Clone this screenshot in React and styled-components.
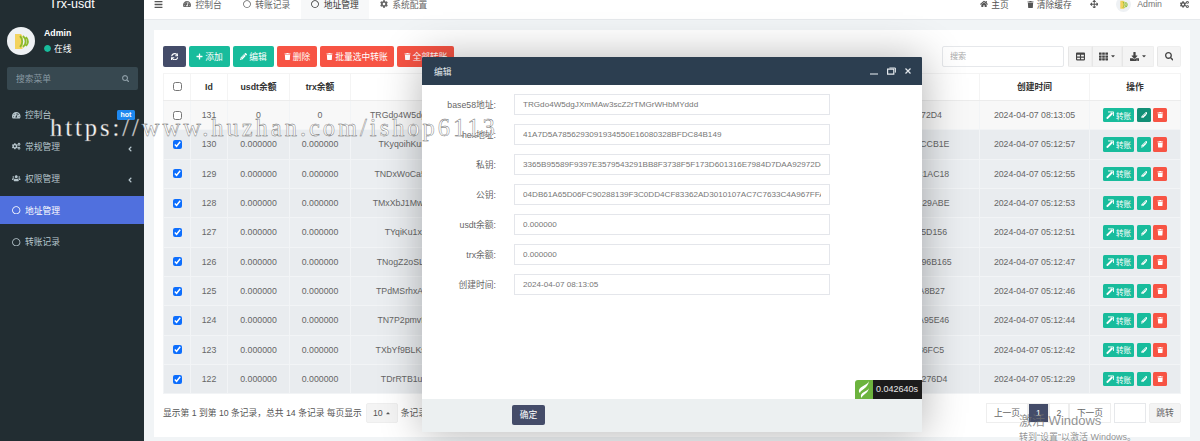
import React from 'react';
import styled, { createGlobalStyle } from 'styled-components';
import {
    FaAngleLeft,
    FaArrowsAlt,
    FaCaretDown,
    FaCaretUp,
    FaCircle,
    FaCog,
    FaCogs,
    FaDownload,
    FaHome,
    FaPencilAlt,
    FaPlus,
    FaRegCircle,
    FaSearch,
    FaSync,
    FaTable,
    FaTachometerAlt,
    FaTh,
    FaTrash,
    FaUsers,
    FaBars,
} from 'react-icons/fa';

const FONT = `"Liberation Sans", "Noto Sans CJK SC", sans-serif`;

const rows = [
    { id: 131, usdt: '0', trx: '0', checked: false, addr: 'TRGdo4W5dgJXmMAw3scZ2rTMGrWHbMYddd', key: '3365B95589F9397E3579543291BB8F3738F5F173D601316E7984D7DAA92972D4', time: '2024-04-07 08:13:05' },
    { id: 130, addr: 'TKyqoihKurd8sjwPqe2nfUa7toyhxkzgbnRea', key: 'DE1FB94DEAC07BFDE53ACFD82EBCA41FDEAB7CD19FEBA62DCEF08AD7CCB1E', time: '2024-04-07 05:12:57' },
    { id: 129, addr: 'TNDxWoCa5tG8pVrs2nYeKqfi3hdLuzmwKcbe', key: '1EFAD92CDE7FA06DBCE31FAD84BEC27DFAE95CB1ADF60ECB7D3FEA21C1AC18', time: '2024-04-07 05:12:55' },
    { id: 128, addr: 'TMxXbJ1Mwq7ERkzs3pAfYo9gNtHdLuVcRans', key: '8FACB73DEC1FA95BDCE46FAD12ECB08DFEA73CB9ADF41ECB6D2FEA05B29ABE', time: '2024-04-07 05:12:53' },
    { id: 127, addr: 'TYqiKu1xAe6vfnrt5hoLdSgzjpW2mcbsne', key: '1DCBE28FDAC74EBDF09CAE35DBF17ACED82FB4DCA60EFB9C3DAE17FA5D156', time: '2024-04-07 05:12:51' },
    { id: 126, addr: 'TNogZ2oSLd4KvuYr8PfEaxTqw1NhjmcbRes', key: '94ADBF17ECDA62FBDE30ACF58DCB29EADF74BC1FDE06ACB8F2DEC47AF96B165', time: '2024-04-07 05:12:47' },
    { id: 125, addr: 'TPdMSrhxAk3JytUo9eWbFcq5nGvLizBmeHs', key: 'CEFB60DABE18FCDA93EBF46CDA05BEFD71CA8EDB42FCE7A1DBF36CEA8B27', time: '2024-04-07 05:12:46' },
    { id: 124, addr: 'TN7P2pmvNf6HsuQr1XgYcEaKt8jLozdbnRe', key: '50DFCA34EDBC86AFDE12CBF79ADE43CBFA08DE6FCB15EAD9C2FBE70DA95E46', time: '2024-04-07 05:12:44' },
    { id: 123, addr: 'TXbYf9BLKs4GmwZu7aDtRpEqh2nVicoeHsn', key: 'A7D093E4C1D6F2385A0E17C4B96D2038C1F5E7A9240C6138E5D7B0291F36FC5', time: '2024-04-07 05:12:42' },
    { id: 122, addr: 'TDrRTB1uiq3nVmKp8hYoSzfga5jxeLcnWb', key: '5C0E2A9D7F13B6480D2C1E76AF395B08D4172E6CA9F0583B1D7E40A26C2276D4', time: '2024-04-07 05:12:29' },
];

const fields = [
    { label: 'base58地址:', value: 'TRGdo4W5dgJXmMAw3scZ2rTMGrWHbMYddd' },
    { label: 'hex地址:', value: '41A7D5A7856293091934550E16080328BFDC84B149' },
    { label: '私钥:', value: '3365B95589F9397E3579543291BB8F3738F5F173D601316E7984D7DAA92972D4' },
    { label: '公钥:', value: '04DB61A65D06FC90288139F3C0DD4CF83362AD3010107AC7C7633C4A967FFA21B0' },
    { label: 'usdt余额:', value: '0.000000' },
    { label: 'trx余额:', value: '0.000000' },
    { label: '创建时间:', value: '2024-04-07 08:13:05' },
];

const menu = [
    { name: '控制台', icon: FaTachometerAlt, hot: true },
    { name: '常规管理', icon: FaCogs, arrow: true },
    { name: '权限管理', icon: FaUsers, arrow: true },
    { name: '地址管理', icon: FaRegCircle, active: true },
    { name: '转账记录', icon: FaRegCircle },
];

const tabs = [
    { name: '控制台', icon: FaTachometerAlt },
    { name: '转账记录', icon: FaRegCircle },
    { name: '地址管理', icon: FaRegCircle, active: true },
    { name: '系统配置', icon: FaCog },
];

const SendIcon = () => (
    <svg width="8" height="8" viewBox="0 0 10 10" fill="none" stroke="currentColor">
        <path d="M1 9.5 8 2.5" strokeWidth="2.4" />
        <path d="M2.5 1.2h7v5" strokeWidth="1.2" />
    </svg>
);

const Avatar = ({ size }) => (
    <svg width={size} height={size} viewBox="0 0 28 28">
        <circle cx="14" cy="14" r="14" fill="#eef1f4" />
        <path d="M8 7h6l1.5 2v13H8z" fill="#f3d35f" />
        <path d="M13 9c3 3 3 8 0 11M16 9c3.5 3 3.5 8 0 11M19 10c2.5 3 2.5 6 0 9" fill="none" stroke="#8dbb2b" strokeWidth="1.8" />
    </svg>
);

const App = () => {
    return (
        <>
            <GlobalStyle />
            <Layout>
                <Sidebar>
                    <Logo>Trx-usdt</Logo>
                    <UserPanel>
                        <Avatar size={28} />
                        <UserInfo>
                            <UserName>Admin</UserName>
                            <UserStatus>
                                <FaCircle size={7} color="#18bc9c" />
                                在线
                            </UserStatus>
                        </UserInfo>
                    </UserPanel>
                    <MenuSearch>
                        搜索菜单
                        <FaSearch size={7.5} />
                    </MenuSearch>
                    <Menu>
                        {menu.map((m) => (
                            <MenuItem key={m.name} $active={m.active}>
                                <MenuIcon>{React.createElement(m.icon, { size: 8.5 })}</MenuIcon>
                                {m.name}
                                {m.hot && <HotBadge>hot</HotBadge>}
                                {m.arrow && (
                                    <MenuArrow>
                                        <FaAngleLeft size={8} />
                                    </MenuArrow>
                                )}
                            </MenuItem>
                        ))}
                    </Menu>
                </Sidebar>

                <Main>
                    <TopNav>
                        <NavToggle>
                            <FaBars size={9} />
                        </NavToggle>
                        {tabs.map((t) => (
                            <NavTab key={t.name} $active={t.active}>
                                {React.createElement(t.icon, { size: 8 })}
                                {t.name}
                            </NavTab>
                        ))}
                        <NavRight>
                            <NavLink>
                                <FaHome size={8} />
                                主页
                            </NavLink>
                            <NavLink>
                                <FaTrash size={7} />
                                清除缓存
                            </NavLink>
                            <NavLink>
                                <FaArrowsAlt size={8.5} />
                            </NavLink>
                            <NavUser>
                                <Avatar size={15} />
                                Admin
                            </NavUser>
                            <NavLink>
                                <FaCogs size={9} />
                            </NavLink>
                        </NavRight>
                    </TopNav>

                    <Content>
                        <Card>
                            <Toolbar>
                                <Btn $kind="dark" $w={23}>
                                    <FaSync size={7.5} />
                                </Btn>
                                <Btn $kind="green" $w={41}>
                                    <FaPlus size={7} />
                                    添加
                                </Btn>
                                <Btn $kind="green" $w={41}>
                                    <FaPencilAlt size={7} />
                                    编辑
                                </Btn>
                                <Btn $kind="red" $w={40}>
                                    <FaTrash size={7} />
                                    删除
                                </Btn>
                                <Btn $kind="red" $w={74}>
                                    <FaTrash size={7} />
                                    批量选中转账
                                </Btn>
                                <Btn $kind="red" $w={57}>
                                    <FaTrash size={7} />
                                    全部转账
                                </Btn>
                                <ToolRight>
                                    <SearchInput placeholder="搜索" readOnly />
                                    <ToolGroup>
                                        <ToolBtn $w={24}>
                                            <FaTable size={9} />
                                        </ToolBtn>
                                        <ToolBtn $w={30}>
                                            <FaTh size={9} />
                                            <FaCaretDown size={6} />
                                        </ToolBtn>
                                        <ToolBtn $w={32}>
                                            <FaDownload size={9} />
                                            <FaCaretDown size={6} />
                                        </ToolBtn>
                                    </ToolGroup>
                                    <SearchBtn>
                                        <FaSearch size={8.5} />
                                    </SearchBtn>
                                </ToolRight>
                            </Toolbar>

                            <Table>
                                <colgroup>
                                    <col width="27" />
                                    <col width="37" />
                                    <col width="62" />
                                    <col width="61" />
                                    <col width="228" />
                                    <col width="401" />
                                    <col width="110" />
                                    <col width="91" />
                                </colgroup>
                                <thead>
                                    <tr>
                                        <Th>
                                            <Check readOnly type="checkbox" />
                                        </Th>
                                        <Th>Id</Th>
                                        <Th>usdt余额</Th>
                                        <Th>trx余额</Th>
                                        <Th>base58地址</Th>
                                        <Th>私钥</Th>
                                        <Th>创建时间</Th>
                                        <Th>操作</Th>
                                    </tr>
                                </thead>
                                <tbody>
                                    {rows.map((r, index) => (
                                        <Row key={r.id} $selected={r.checked !== false} $odd={index % 2 === 0}>
                                            <Td>
                                                <Check readOnly type="checkbox" checked={r.checked !== false} />
                                            </Td>
                                            <Td>{r.id}</Td>
                                            <Td>{r.usdt || '0.000000'}</Td>
                                            <Td>{r.trx || '0.000000'}</Td>
                                            <Td>{r.addr}</Td>
                                            <Td>{r.key}</Td>
                                            <Td>{r.time}</Td>
                                            <Td>
                                                <Actions>
                                                    <MiniBtn $kind="green" $w={31.5}>
                                                        <SendIcon />
                                                        转账
                                                    </MiniBtn>
                                                    <MiniBtn $kind={index === 0 ? 'hover' : 'green'} $w={14}>
                                                        <FaPencilAlt size={6.5} />
                                                    </MiniBtn>
                                                    <MiniBtn $kind="red" $w={14}>
                                                        <FaTrash size={6.5} />
                                                    </MiniBtn>
                                                </Actions>
                                            </Td>
                                        </Row>
                                    ))}
                                </tbody>
                            </Table>

                            <TableFooter>
                                <PageInfo>
                                    显示第 1 到第 10 条记录，总共 14 条记录 每页显示
                                    <PageSize>
                                        10 <FaCaretUp size={6} />
                                    </PageSize>
                                    条记录
                                </PageInfo>
                                <Pager>
                                    <PageBtn $w={42}>上一页</PageBtn>
                                    <PageBtn $w={21} $active>
                                        1
                                    </PageBtn>
                                    <PageBtn $w={20}>2</PageBtn>
                                    <PageBtn $w={42}>下一页</PageBtn>
                                    <JumpInput readOnly />
                                    <JumpBtn>跳转</JumpBtn>
                                </Pager>
                            </TableFooter>
                        </Card>
                    </Content>
                </Main>

                <Modal>
                    <ModalHead>
                        编辑
                        <ModalControls>
                            <svg width="8" height="8" viewBox="0 0 8 8" stroke="#cfd6dc" fill="none">
                                <path d="M0 7h8" strokeWidth="1.2" />
                            </svg>
                            <svg width="9" height="8" viewBox="0 0 9 8" stroke="#e3e8ec" fill="none">
                                <path d="M.6 2.2h6.2v5H.6z" strokeWidth="1.2" />
                                <path d="M2.4 1h6v4.6" strokeWidth="1" />
                            </svg>
                            <svg width="6" height="6" viewBox="0 0 6 6" stroke="#e3e8ec" fill="none">
                                <path d="M.5.5l5 5M5.5.5l-5 5" strokeWidth="1.2" />
                            </svg>
                        </ModalControls>
                    </ModalHead>
                    <ModalBody>
                        {fields.map((f) => (
                            <FormRow key={f.label}>
                                <FormLabel>{f.label}</FormLabel>
                                <FormInput readOnly value={f.value} />
                            </FormRow>
                        ))}
                        <Trace>
                            <TraceLogo>
                                <svg width="12" height="17" viewBox="0 0 12 17" fill="#fff">
                                    <path d="M11 0C10 4 2 5 1 9c-.4 1.6.2 2.6 1 3C2.6 8.5 10 7.5 11 0z" />
                                    <path d="M11 7C10 10 4 11 3 14c-.3 1 0 2 .6 3C4.5 13.5 10 12.5 11 7z" />
                                </svg>
                            </TraceLogo>
                            <TraceTime>0.042640s</TraceTime>
                        </Trace>
                    </ModalBody>
                    <ModalFoot>
                        <ConfirmBtn>确定</ConfirmBtn>
                    </ModalFoot>
                </Modal>

                <Watermark>https://www.huzhan.com/ishop6113</Watermark>
                <Activation>
                    <ActivationTitle>激活 Windows</ActivationTitle>
                    转到“设置”以激活 Windows。
                </Activation>
            </Layout>
        </>
    );
};

export default App;

const GlobalStyle = createGlobalStyle`
    html, body {
        margin: 0;
        height: 441px;
        overflow: hidden;
        background: #f1f4f6;
    }
    * {
        box-sizing: border-box;
    }
    #root {
        font-family: ${FONT};
        font-size: 8.75px;
        color: #666;
    }
`;

const Layout = styled.div`
    display: flex;
    margin-top: -11px;
    height: 452px;
    position: relative;
`;

const Sidebar = styled.aside`
    width: 144px;
    flex: none;
    background: #222d32;
    color: #b8c7ce;
`;

const Logo = styled.div`
    height: 31px;
    line-height: 31px;
    text-align: center;
    color: #fff;
    font-size: 12.5px;
`;

const UserPanel = styled.div`
    display: flex;
    align-items: center;
    gap: 9px;
    height: 35px;
    padding: 7px 7px 0;
`;

const UserInfo = styled.div`
    display: flex;
    flex-direction: column;
    gap: 4px;
    padding-top: 1px;
`;

const UserName = styled.div`
    color: #fff;
    font-weight: 600;
`;

const UserStatus = styled.div`
    display: flex;
    align-items: center;
    gap: 3px;
    color: #fff;
`;

const MenuSearch = styled.div`
    display: flex;
    align-items: center;
    justify-content: space-between;
    margin: 12px 6px 0 7px;
    padding: 0 9px;
    height: 23px;
    border-radius: 2px;
    background: #374850;
    color: #8a9aa3;
`;

const Menu = styled.ul`
    list-style: none;
    margin: 10.5px 0 0;
    padding: 0;
`;

const MenuItem = styled.li`
    display: flex;
    align-items: center;
    position: relative;
    height: 28.5px;
    margin-bottom: 3.3px;
    padding-left: 12px;
    background: ${(p) => (p.$active ? '#5070de' : 'transparent')};
    color: ${(p) => (p.$active ? '#fff' : '#b8c7ce')};
`;

const MenuIcon = styled.span`
    display: inline-flex;
    width: 13px;
`;

const HotBadge = styled.span`
    margin-left: auto;
    margin-right: 9px;
    width: 18px;
    height: 9.5px;
    line-height: 9px;
    border-radius: 1.5px;
    text-align: center;
    background: #1e88f0;
    color: #fff;
    font-size: 7px;
    font-weight: 600;
`;

const MenuArrow = styled.span`
    display: inline-flex;
    margin-left: auto;
    margin-right: 10px;
    padding-top: 4px;
`;

const Main = styled.div`
    flex: 1;
    min-width: 0;
    display: flex;
    flex-direction: column;
`;

const TopNav = styled.nav`
    display: flex;
    height: 31px;
    flex: none;
    background: #fff;
    border-bottom: 1.5px solid #e6e9ec;
    color: #555;
`;

const NavToggle = styled.div`
    display: flex;
    align-items: center;
    width: 28.5px;
    padding-left: 10px;
`;

const NavTab = styled.div`
    display: flex;
    align-items: center;
    gap: 4.5px;
    padding: 0 10.5px;
    background: ${(p) => (p.$active ? '#f7f8f9' : 'transparent')};
    color: ${(p) => (p.$active ? '#333' : '#666')};
`;

const NavRight = styled.div`
    display: flex;
    align-items: center;
    gap: 18px;
    margin-left: auto;
    padding-right: 11px;
`;

const NavLink = styled.div`
    display: flex;
    align-items: center;
    gap: 3px;
`;

const NavUser = styled(NavLink)`
    gap: 6px;
    color: #777;
`;

const Content = styled.main`
    padding: 10px 10px 0;
    flex: 1;
    min-height: 0;
`;

const Card = styled.section`
    height: 407px;
    padding: 16px 9px 0;
    background: #fff;
`;

const Toolbar = styled.div`
    display: flex;
    gap: 3px;
    height: 20.5px;
`;

const kindColors = {
    dark: '#444c69',
    green: '#18bc9c',
    red: '#f75444',
    hover: '#128f76',
};

const Btn = styled.div`
    display: flex;
    align-items: center;
    justify-content: center;
    gap: 2px;
    width: ${(p) => p.$w}px;
    border-radius: 2px;
    color: #fff;
    background: ${(p) => kindColors[p.$kind]};
`;

const ToolRight = styled.div`
    display: flex;
    margin-left: auto;
    gap: 3px;
`;

const SearchInput = styled.input`
    width: 122px;
    margin-right: 1px;
    padding: 0 7px;
    font: inherit;
    font-size: 8.125px;
    border: 1px solid #e6e8eb;
    border-radius: 2px;
    outline: none;
    &::placeholder {
        color: #aaa;
    }
`;

const ToolGroup = styled.div`
    display: flex;
    border-radius: 2px;
    overflow: hidden;
`;

const ToolBtn = styled.div`
    display: flex;
    align-items: center;
    justify-content: center;
    gap: 2px;
    width: ${(p) => p.$w}px;
    background: #f4f4f4;
    border: 1px solid #eee;
    border-left-color: #e6e6e6;
    color: #444;
`;

const SearchBtn = styled(ToolBtn)`
    width: 24px;
    border-radius: 2px;
`;

const Table = styled.table`
    width: 1017px;
    margin-top: 6px;
    table-layout: fixed;
    border-collapse: collapse;
`;

const Th = styled.th`
    height: 27.5px;
    padding: 0;
    border: 1px solid #f4f4f4;
    border-bottom: 1.5px solid #ececec;
    text-align: center;
    color: #333;
    font-weight: 700;
    white-space: nowrap;
    overflow: hidden;
`;

const Row = styled.tr`
    height: 29.33px;
    background: ${(p) => (!p.$selected ? '#f8f8f8' : p.$odd ? '#ebeef1' : '#e9ecef')};
`;

const Td = styled.td`
    padding: 0;
    border: 1px solid #f2f4f6;
    text-align: center;
    white-space: nowrap;
    color: #666;
    overflow: visible;
`;

const Check = styled.input`
    display: block;
    width: 9px;
    height: 9px;
    margin: 0 auto;
    accent-color: #0d6efd;
`;

const Actions = styled.div`
    display: flex;
    justify-content: center;
    gap: 2.5px;
`;

const MiniBtn = styled.div`
    display: flex;
    align-items: center;
    justify-content: center;
    gap: 2px;
    width: ${(p) => p.$w}px;
    height: 14.5px;
    border-radius: 1.5px;
    color: #fff;
    font-size: 7.5px;
    background: ${(p) => kindColors[p.$kind]};
`;

const TableFooter = styled.div`
    display: flex;
    justify-content: space-between;
    margin-top: 8.5px;
    height: 20px;
`;

const PageInfo = styled.div`
    display: flex;
    align-items: center;
    gap: 3px;
    color: #555;
`;

const PageSize = styled.div`
    display: flex;
    align-items: center;
    justify-content: center;
    gap: 2px;
    width: 32px;
    height: 20px;
    margin: 0 0 0 1px;
    border: 1px solid #eee;
    border-radius: 2px;
    background: #f4f4f4;
`;

const Pager = styled.div`
    display: flex;
`;

const PageBtn = styled.div`
    display: flex;
    align-items: center;
    justify-content: center;
    width: ${(p) => p.$w}px;
    border: 1px solid #eee;
    background: ${(p) => (p.$active ? '#444c69' : '#fff')};
    color: ${(p) => (p.$active ? '#fff' : '#666')};
`;

const JumpInput = styled.input`
    width: 32px;
    margin-left: 3px;
    border: 1px solid #e6e8eb;
    outline: none;
`;

const JumpBtn = styled(PageBtn)`
    width: 32px;
    margin-left: 3px;
    background: #f4f4f4;
    border-radius: 2px;
`;

const Modal = styled.div`
    position: absolute;
    left: 422px;
    top: 68px;
    width: 500px;
    height: 375px;
    display: flex;
    flex-direction: column;
    background: #fff;
    box-shadow: 1px 1px 40px rgba(0, 0, 0, 0.3);
`;

const ModalHead = styled.div`
    display: flex;
    align-items: center;
    justify-content: space-between;
    height: 28px;
    padding: 0 11px 0 12px;
    background: #2c3e50;
    color: #e6eaed;
    border-radius: 1px 1px 0 0;
`;

const ModalControls = styled.div`
    display: flex;
    align-items: center;
    gap: 9px;
`;

const ModalBody = styled.div`
    flex: 1;
    position: relative;
    padding-top: 9px;
`;

const FormRow = styled.div`
    display: flex;
    align-items: center;
    gap: 18px;
    height: 21px;
    margin-bottom: 9px;
`;

const FormLabel = styled.label`
    width: 74px;
    text-align: right;
    color: #666;
`;

const FormInput = styled.input`
    width: 316px;
    height: 21px;
    padding: 0 8px;
    font: inherit;
    font-size: 8.125px;
    color: #777;
    border: 1px solid #e4e6eb;
    outline: none;
`;

const Trace = styled.div`
    position: absolute;
    right: 0;
    bottom: 0;
    display: flex;
    height: 19px;
`;

const TraceLogo = styled.div`
    display: flex;
    align-items: center;
    justify-content: center;
    width: 18px;
    background: #6cb33e;
    border-radius: 3px 0 0 0;
    overflow: hidden;
`;

const TraceTime = styled.div`
    width: 49px;
    line-height: 19px;
    padding-left: 3px;
    background: #1c1c1c;
    color: #e8e8e8;
    font-size: 9px;
`;

const ModalFoot = styled.div`
    height: 33px;
    flex: none;
    padding: 5.5px 0 0 90px;
    background: #ecf0f1;
`;

const ConfirmBtn = styled.div`
    display: flex;
    align-items: center;
    justify-content: center;
    width: 33px;
    height: 20px;
    border-radius: 2px;
    background: #444c69;
    color: #fff;
`;

const Watermark = styled.div`
    position: absolute;
    left: 50px;
    top: 125px;
    font-family: "Liberation Serif", serif;
    font-size: 24.5px;
    line-height: 28px;
    letter-spacing: 2.97px;
    white-space: nowrap;
    color: #fff;
    -webkit-text-stroke: 0.4px #666;
    pointer-events: none;
`;

const Activation = styled.div`
    position: absolute;
    left: 1019px;
    top: 424px;
    color: rgba(110, 110, 110, 0.75);
    font-size: 9px;
    white-space: nowrap;
    pointer-events: none;
`;

const ActivationTitle = styled.div`
    font-size: 13px;
    line-height: 16px;
    margin-bottom: 1px;
`;
